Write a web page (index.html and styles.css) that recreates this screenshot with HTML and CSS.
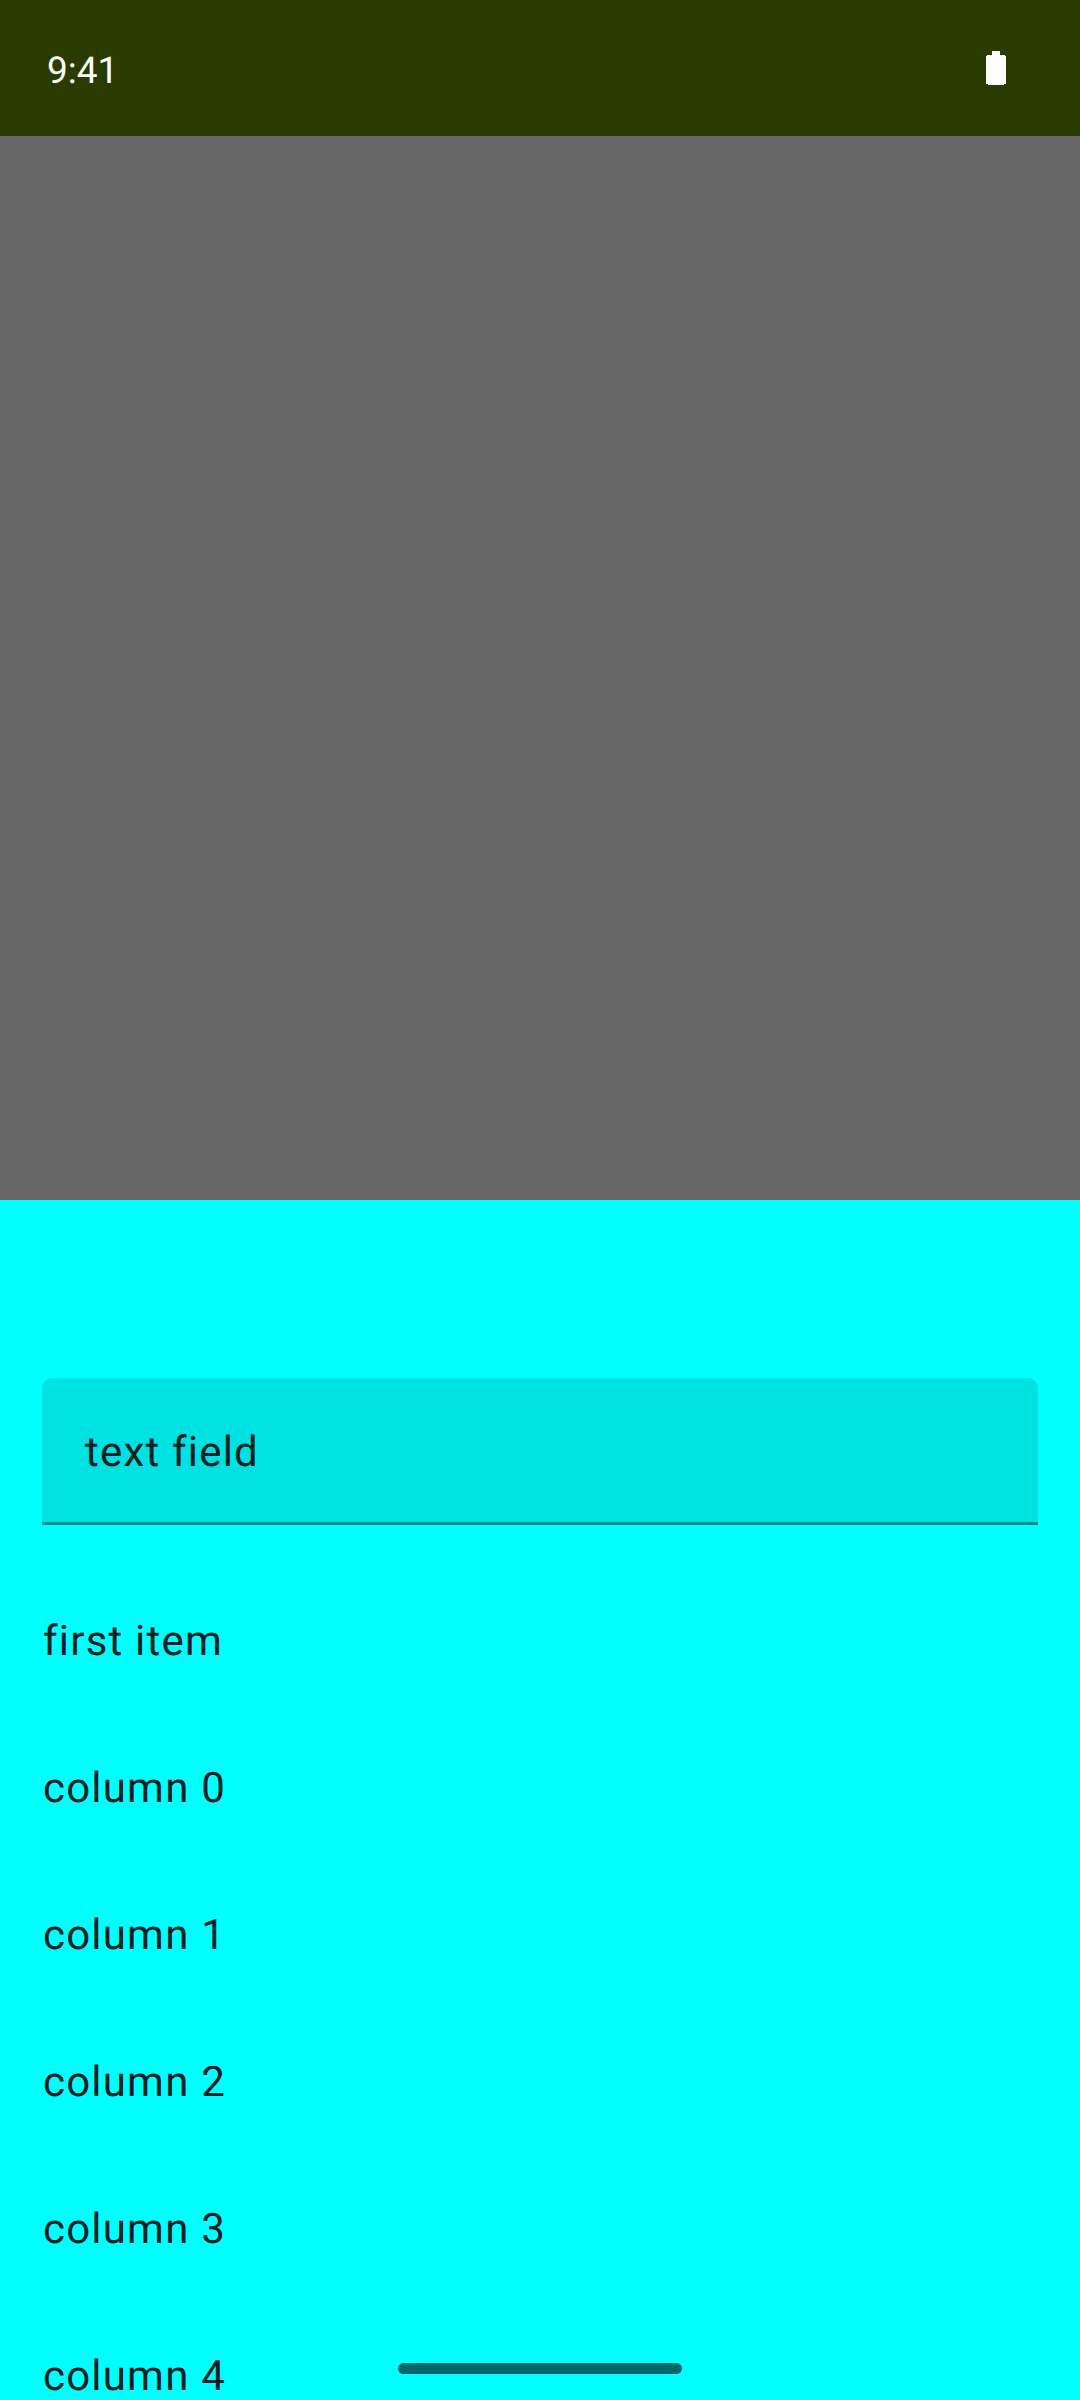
FILE: index.html
```html
<!DOCTYPE html>
<html lang="en">
<head>
<meta charset="utf-8">
<title>Bottom sheet</title>
<link rel="stylesheet" href="styles.css">
</head>
<body>
<div class="screen">
  <header class="status-bar">
    <span class="clock">9:41</span>
    <svg class="battery" viewBox="0 0 20 34" width="20" height="34" shape-rendering="crispEdges"><path fill="#fff" d="M6 0h8v4h5v1h1v28h-2v1H2v-1H0V5h1V4h5z"/></svg>
  </header>
  <div class="scrim"></div>
  <main class="sheet">
    <div class="text-field">text field</div>
    <ul class="list">
      <li>first item</li>
      <li>column 0</li>
      <li>column 1</li>
      <li>column 2</li>
      <li>column 3</li>
      <li>column 4</li>
    </ul>
  </main>
  <div class="home-handle"></div>
</div>
</body>
</html>
```
FILE: styles.css
```css
* { box-sizing: border-box; }
body { margin: 0; font-family: Roboto, sans-serif; text-rendering: geometricPrecision; }
.screen {
  position: relative;
  display: flex;
  flex-direction: column;
  width: 1080px;
  height: 2400px;
  overflow: hidden;
}
.status-bar {
  display: flex;
  justify-content: space-between;
  align-items: center;
  height: 136px;
  padding: 0 74px 0 47px;
  background: #2a3b00;
  color: #fff;
}
.clock { font-size: 37px; line-height: 42px; padding-top: 8px; }
.battery { display: block; }
.scrim { height: 1064px; background: #666; }
.sheet {
  flex: 1;
  min-height: 0;
  padding: 178px 42px 0;
  background: #0ff;
  color: #002121;
  font-size: 42px;
  letter-spacing: 1.2px;
}
.text-field {
  display: flex;
  align-items: center;
  height: 147px;
  padding: 3px 0 0 43px;
  border-radius: 10px 10px 0 0;
  background: #00e1e1;
  border-bottom: 2px solid #008282;
  box-shadow: inset 0 -1px #009c9c;
}
.list { margin: 43px 0 0; padding: 0 0 0 1px; list-style: none; }
.list li { display: flex; align-items: center; height: 147px; }
.home-handle {
  position: absolute;
  left: 398px;
  top: 2363px;
  width: 284px;
  height: 11px;
  border-radius: 6px;
  background: #006868;
}
```
